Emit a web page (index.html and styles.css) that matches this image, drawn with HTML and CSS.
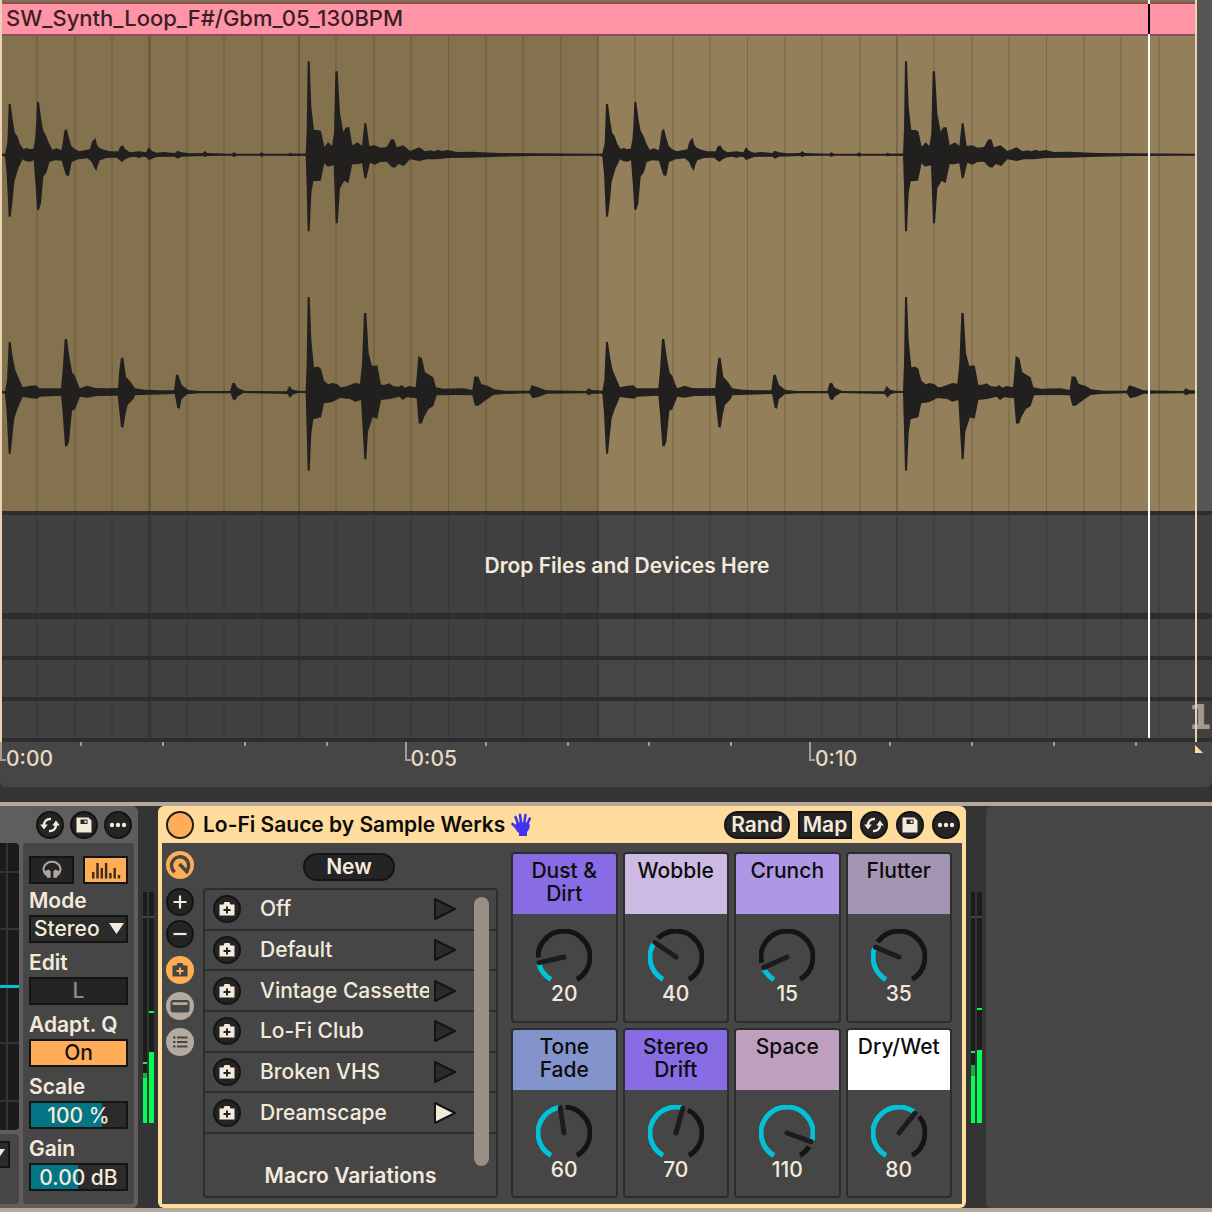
FILE: index.html
```html
<!DOCTYPE html>
<html lang="en">
<head>
<meta charset="utf-8">
<meta name="viewport" content="width=device-width, initial-scale=1">
<title>SW_Synth_Loop_F#/Gbm_05_130BPM</title>
<link rel="stylesheet" href="styles.css">
</head>
<body>
<svg class="defs" aria-hidden="true">
  <symbol id="i-swap" viewBox="0 0 28 28"><g fill="none" stroke="currentColor" stroke-width="2.400"><path d="M15 8C11 7.500 8 10 8 14"/><path d="M13 20C17 20.500 20 18 20 14"/></g><path fill="currentColor" d="M4.200 13.500h7.600L8 18.500zM16.200 14.500h7.600L20 9.500z"/></symbol>
  <symbol id="i-save" viewBox="0 0 28 28"><path fill="currentColor" fill-rule="evenodd" d="M6.500 6.500h12l3 3v12h-15zM10.500 8.500v4.500h7V8.500z"/><path fill="currentColor" d="M14.500 9.500h2v2.500h-2z"/></symbol>
  <symbol id="i-more" viewBox="0 0 28 28"><g fill="currentColor"><circle cx="8" cy="14" r="2.200"/><circle cx="14" cy="14" r="2.200"/><circle cx="20" cy="14" r="2.200"/></g></symbol>
  <symbol id="i-cam" viewBox="0 0 28 28"><path fill="currentColor" fill-rule="evenodd" d="M7 9.500h3.500l1-2.500h5l1 2.500H21.500v11H6.500v-11zM13 11.500v2.500h-2.500v2H13v2.500h2v-2.500h2.500v-2H15v-2.500z"/></symbol>
  <symbol id="i-play" viewBox="0 0 26 26"><path stroke="#141414" stroke-width="2" stroke-linejoin="round" fill="currentColor" d="M3 3L23 13L3 23z"/></symbol>
  <symbol id="i-knob" viewBox="0 0 28 28"><path fill="none" stroke="currentColor" stroke-width="3.500" d="M8.800 21.200A8.600 8.600 0 1 1 21 19.500M13.500 13L22 22"/></symbol>
</svg>

<main class="arrangement">
  <div class="lane">
    <div class="lane-body clip">
      <header class="clip-name">SW_Synth_Loop_F#/Gbm_05_130BPM</header>
      <div class="clip-body">
        <svg class="wave" viewBox="0 0 3588 1425" preserveAspectRatio="none" role="img" aria-label="Stereo waveform">
          <g id="phrase">
            <path transform="translate(0 -108)" d="M6 461L15 461 22 430 26 312 32 312 39 365 45 400 52 408 60 432 70 447 80 444 88 447 100 446 105 420 108 380 111 306 117 306 124 360 130 393 137 404 148 432 157 449 170 445 184 451 188 430 193 392 200 386 206 410 214 438 225 448 238 454 258 450 270 448 276 425 286 413 291 434 298 443 312 449 330 454 355 454 360 440 369 436 376 448 390 457 418 454 438 457 446 442 456 453 470 458 490 456 525 459 532 452 545 457 570 460 608 459 615 453 622 459 695 461 702 457 710 461 778 461 785 457 792 461 865 461 870 458 878 461 920 461 920 467 878 467 870 469 862 467 792 467 785 470 778 467 710 467 702 471 695 467 622 468 615 471 608 468 545 470 532 476 525 470 470 471 456 476 446 480 438 471 425 470 418 474 405 470 390 472 376 478 366 486 358 480 350 473 320 474 300 481 294 495 289 513 282 502 275 485 262 475 235 478 215 486 207 528 198 526 190 500 185 482 165 481 148 486 140 516 130 530 123 610 117 629 111 629 107 560 101 480 92 485 78 484 68 478 55 505 43 545 38 600 32 650 26 650 20 520 15 470 6 467Z"/>
            <path transform="translate(870 12)" d="M0 341L47 341 50 270 53 64 59 64 64 200 72 270 85 270 93 274 103 320 115 307 126 318 132 280 136 94 143 94 150 220 160 275 168 262 178 262 187 316 203 307 216 318 220 280 223 250 229 250 238 318 255 316 270 323 290 321 303 298 312 298 320 322 340 316 360 333 388 322 405 334 420 331 432 334 445 329 455 333 475 330 500 336 545 335 630 339 730 340 940 341 940 347 730 348 635 350 540 353 475 354 440 358 410 358 388 363 360 358 342 378 325 372 315 383 305 381 290 365 270 366 255 374 240 368 229 415 223 415 216 370 200 373 187 373 175 430 163 422 150 445 143 550 137 550 131 376 113 380 103 370 92 422 70 424 64 460 59 574 53 574 50 440 47 347 0 347Z"/>
            <path transform="translate(0 732)" d="M6 333L15 333 21 300 26 186 32 186 38 230 46 270 55 292 68 322 90 317 108 316 118 325 150 325 183 325 188 270 194 177 201 177 208 230 217 278 225 288 239 325 262 317 285 324 320 325 354 324 358 270 363 233 370 233 378 290 392 306 405 325 435 329 480 331 522 331 528 284 535 284 545 315 565 330 600 333 690 333 697 309 704 308 712 323 735 333 860 334 868 318 878 329 895 333 895 339 880 343 870 353 862 342 730 339 712 350 706 361 698 358 692 340 600 340 562 343 545 357 539 386 532 384 524 342 405 346 400 358 383 375 377 400 370 443 363 441 353 347 290 348 262 353 240 350 225 388 216 392 207 485 201 500 195 498 188 400 183 347 120 350 110 356 90 354 68 351 52 388 43 415 38 460 32 521 26 521 20 400 15 342 6 339Z"/>
            <path transform="translate(870 732)" d="M12 332L47 333 50 250 53 51 59 51 64 180 72 262 85 260 93 266 102 302 115 313 128 309 142 313 152 322 165 320 195 309 210 311 216 250 222 99 229 99 236 220 246 258 262 256 273 314 285 314 298 310 310 319 328 320 335 315 345 323 358 318 377 322 380 290 385 228 396 235 405 277 430 292 438 322 460 326 520 325 547 330 553 289 565 290 574 312 595 318 612 328 650 332 718 332 725 316 740 320 768 331 888 333 895 325 905 330 940 332 940 340 905 342 895 346 888 340 770 341 745 351 728 355 718 340 640 342 610 345 585 362 565 377 555 377 547 346 500 345 440 346 430 378 415 388 402 412 396 430 386 431 380 355 350 352 338 360 328 350 300 357 273 360 262 416 248 412 234 455 229 538 223 538 213 360 195 365 180 357 150 354 125 367 102 370 93 412 70 418 64 460 59 572 53 572 50 450 47 339 12 339Z"/>
          </g>
          <use href="#phrase" x="1792"/>
        </svg>
      </div>
    </div>
    <div class="lane-tail tail-top"></div>
  </div>
  <div class="lane drop">
    <div class="lane-body"><p class="drop-text">Drop Files and Devices Here</p></div>
    <div class="lane-tail"></div>
  </div>
  <div class="lane thin"><div class="lane-body"></div><div class="lane-tail"></div></div>
  <div class="lane thin"><div class="lane-body"></div><div class="lane-tail"></div></div>
  <div class="lane thin"><div class="lane-body"></div><div class="lane-tail"></div></div>
  <div class="ruler">
    <div class="seconds"><span>0:00</span></div>
    <div class="seconds"><span>0:05</span></div>
    <div class="seconds"><span>0:10</span></div>
  </div>
  <div class="edge edge-start"></div>
  <div class="bar-count">1</div>
  <div class="edge edge-end"></div>
  <div class="playhead"></div>
</main>

<section class="rack">
  <article class="device eq">
    <header class="eq-head">
      <button class="round" aria-label="Hot-swap"><svg><use href="#i-swap"/></svg></button>
      <button class="round" aria-label="Save"><svg><use href="#i-save"/></svg></button>
      <button class="round" aria-label="More"><svg><use href="#i-more"/></svg></button>
    </header>
    <div class="eq-main">
      <div class="eq-left">
        <div class="graph"></div>
        <div class="graph-foot"><button class="mini" aria-label="Filter menu"><i class="tri"></i></button></div>
      </div>
      <div class="eq-panel">
        <div class="pair">
          <button class="box" aria-label="Audition"><svg viewBox="0 0 24 22"><path fill="none" stroke="#b0a8a0" stroke-width="2.200" d="M5 16C2 12 2 9 4 6C8 0.500 16 0.500 20 6C22 9 22 12 19 16"/><path fill="#b0a8a0" d="M4.500 12l4-1.500 2 2v7l-3.500 0-3-4zM19.500 12l-4-1.500-2 2v7l3.500 0 3-4z"/></svg></button>
          <button class="box on" aria-label="Analyze"><svg viewBox="0 0 30 18"><path stroke="#3c2c18" stroke-width="2.400" d="M2.200 17.500V11M6.500 17.500V2M10.800 17.500V7M15.100 17.500V2M19.400 17.500V12M23.700 17.500V7M28 17.500V14"/></svg></button>
        </div>
        <label class="field">Mode<span class="select"><select><option>Stereo</option></select><i class="tri"></i></span></label>
        <div class="field"><span>Edit</span><button class="box dim">L</button></div>
        <div class="field"><span>Adapt. Q</span><button class="box on">On</button></div>
        <label class="field">Scale<input class="box value scale" type="text" value="100 %"></label>
        <label class="field">Gain<input class="box value gain" type="text" value="0.00 dB"></label>
      </div>
    </div>
  </article>

  <div class="meters">
    <svg viewBox="0 0 10 231"><path fill="#1c1c1c" d="M0 0h4v231H0zM6 0h5v231H6z"/><path fill="#464646" d="M0 24h4v2H0zM6 24h5v2H6z"/><path fill="#0fb045" d="M0 181h4v6H0z"/><path fill="#00ff55" d="M0 186h4v45H0zM6 160h5v71H6zM0 170h4v2H0zM6 119h5v2H6z"/></svg>
  </div>

  <article class="device sauce">
    <header class="sauce-head">
      <button class="power" aria-label="Device on"></button>
      <h1>Lo-Fi Sauce by Sample Werks</h1>
      <svg class="hand" viewBox="0 0 22 24"><g fill="none" stroke="#4034f0" stroke-linecap="round" stroke-width="2.600"><path d="M7.500 12L4.500 4M10.200 11L9 1.800M13 11L14.500 2M15.500 13L18.800 5.500"/><path d="M7 16L1.500 11"/></g><path fill="#4034f0" d="M6 9.500h10.500L19 12c-.5 2.500-1 5-3 7v4h-8v-3C5 18 4.500 16 3.500 13z"/></svg>
      <span class="spacer"></span>
      <button class="pill">Rand</button>
      <button class="square">Map</button>
      <button class="round" aria-label="Hot-swap"><svg><use href="#i-swap"/></svg></button>
      <button class="round" aria-label="Save"><svg><use href="#i-save"/></svg></button>
      <button class="round" aria-label="More"><svg><use href="#i-more"/></svg></button>
    </header>
    <div class="sauce-main">
      <nav class="side">
        <button class="round amber" aria-label="Show macros"><svg><use href="#i-knob"/></svg></button>
        <button class="round gap-top" aria-label="Add macro"><svg viewBox="0 0 28 28"><path stroke="currentColor" stroke-width="2.200" d="M14 7.500v13M7.500 14h13"/></svg></button>
        <button class="round tight" aria-label="Remove macro"><svg viewBox="0 0 28 28"><path stroke="currentColor" stroke-width="2.200" d="M7.500 14h13"/></svg></button>
        <button class="round amber" aria-label="Show variations"><svg><use href="#i-cam"/></svg></button>
        <button class="round stone" aria-label="Show devices"><svg viewBox="0 0 28 28"><rect x="5.500" y="9" width="17" height="10.500" rx="2" fill="none" stroke="currentColor" stroke-width="2"/><path fill="currentColor" d="M6 13h16v6H6z"/><path stroke="currentColor" stroke-width="1.500" d="M6 9.500h16"/></svg></button>
        <button class="round stone" aria-label="Show chains"><svg viewBox="0 0 28 28"><path stroke="currentColor" stroke-width="2" d="M7 9.500h2.500M11 9.500h10.500M7 14h2.500M11 14h10.500M7 18.500h2.500M11 18.500h10.500"/></svg></button>
      </nav>
      <div class="variations">
        <button class="pill new">New</button>
        <div class="list">
          <ul>
            <li><button class="round" aria-label="Store"><svg><use href="#i-cam"/></svg></button><span>Off</span><button class="play" aria-label="Launch"><svg><use href="#i-play"/></svg></button></li>
            <li><button class="round" aria-label="Store"><svg><use href="#i-cam"/></svg></button><span>Default</span><button class="play" aria-label="Launch"><svg><use href="#i-play"/></svg></button></li>
            <li><button class="round" aria-label="Store"><svg><use href="#i-cam"/></svg></button><span>Vintage Cassette</span><button class="play" aria-label="Launch"><svg><use href="#i-play"/></svg></button></li>
            <li><button class="round" aria-label="Store"><svg><use href="#i-cam"/></svg></button><span>Lo-Fi Club</span><button class="play" aria-label="Launch"><svg><use href="#i-play"/></svg></button></li>
            <li><button class="round" aria-label="Store"><svg><use href="#i-cam"/></svg></button><span>Broken VHS</span><button class="play" aria-label="Launch"><svg><use href="#i-play"/></svg></button></li>
            <li><button class="round" aria-label="Store"><svg><use href="#i-cam"/></svg></button><span>Dreamscape</span><button class="play active" aria-label="Launch"><svg><use href="#i-play"/></svg></button></li>
          </ul>
          <p>Macro Variations</p>
          <div class="scrollbar"></div>
        </div>
      </div>
      <div class="macros">
        <label class="macro"><span class="name violet">Dust &amp; Dirt</span><span class="knob"><svg viewBox="0 0 56 56"><path class="rest" pathLength="127" stroke-dasharray="0 25 102" d="M15 50.500A26 26 0 1 1 41 50.500"/><path class="done" pathLength="127" stroke-dasharray="19 200" d="M15 50.500A26 26 0 1 1 41 50.500"/><path class="hand-line" transform="rotate(-102.800 28 28)" d="M28 28V2.500"/></svg><input type="range" min="0" max="127" value="20"></span><output>20</output></label>
        <label class="macro"><span class="name lilac">Wobble</span><span class="knob"><svg viewBox="0 0 56 56"><path class="rest" pathLength="127" stroke-dasharray="0 45 82" d="M15 50.500A26 26 0 1 1 41 50.500"/><path class="done" pathLength="127" stroke-dasharray="39 200" d="M15 50.500A26 26 0 1 1 41 50.500"/><path class="hand-line" transform="rotate(-55.500 28 28)" d="M28 28V2.500"/></svg><input type="range" min="0" max="127" value="40"></span><output>40</output></label>
        <label class="macro"><span class="name lavender">Crunch</span><span class="knob"><svg viewBox="0 0 56 56"><path class="rest" pathLength="127" stroke-dasharray="0 20 107" d="M15 50.500A26 26 0 1 1 41 50.500"/><path class="done" pathLength="127" stroke-dasharray="14 200" d="M15 50.500A26 26 0 1 1 41 50.500"/><path class="hand-line" transform="rotate(-114.600 28 28)" d="M28 28V2.500"/></svg><input type="range" min="0" max="127" value="15"></span><output>15</output></label>
        <label class="macro"><span class="name mauve">Flutter</span><span class="knob"><svg viewBox="0 0 56 56"><path class="rest" pathLength="127" stroke-dasharray="0 40 87" d="M15 50.500A26 26 0 1 1 41 50.500"/><path class="done" pathLength="127" stroke-dasharray="34 200" d="M15 50.500A26 26 0 1 1 41 50.500"/><path class="hand-line" transform="rotate(-67.300 28 28)" d="M28 28V2.500"/></svg><input type="range" min="0" max="127" value="35"></span><output>35</output></label>
        <label class="macro"><span class="name blue">Tone Fade</span><span class="knob"><svg viewBox="0 0 56 56"><path class="rest" pathLength="127" stroke-dasharray="0 65 62" d="M15 50.500A26 26 0 1 1 41 50.500"/><path class="done" pathLength="127" stroke-dasharray="59 200" d="M15 50.500A26 26 0 1 1 41 50.500"/><path class="hand-line" transform="rotate(-8.300 28 28)" d="M28 28V2.500"/></svg><input type="range" min="0" max="127" value="60"></span><output>60</output></label>
        <label class="macro"><span class="name violet">Stereo Drift</span><span class="knob"><svg viewBox="0 0 56 56"><path class="rest" pathLength="127" stroke-dasharray="0 75 52" d="M15 50.500A26 26 0 1 1 41 50.500"/><path class="done" pathLength="127" stroke-dasharray="69 200" d="M15 50.500A26 26 0 1 1 41 50.500"/><path class="hand-line" transform="rotate(15.400 28 28)" d="M28 28V2.500"/></svg><input type="range" min="0" max="127" value="70"></span><output>70</output></label>
        <label class="macro"><span class="name rose">Space</span><span class="knob"><svg viewBox="0 0 56 56"><path class="rest" pathLength="127" stroke-dasharray="0 115 12" d="M15 50.500A26 26 0 1 1 41 50.500"/><path class="done" pathLength="127" stroke-dasharray="109 200" d="M15 50.500A26 26 0 1 1 41 50.500"/><path class="hand-line" transform="rotate(109.800 28 28)" d="M28 28V2.500"/></svg><input type="range" min="0" max="127" value="110"></span><output>110</output></label>
        <label class="macro"><span class="name white">Dry/Wet</span><span class="knob"><svg viewBox="0 0 56 56"><path class="rest" pathLength="127" stroke-dasharray="0 85 42" d="M15 50.500A26 26 0 1 1 41 50.500"/><path class="done" pathLength="127" stroke-dasharray="79 200" d="M15 50.500A26 26 0 1 1 41 50.500"/><path class="hand-line" transform="rotate(39 28 28)" d="M28 28V2.500"/></svg><input type="range" min="0" max="127" value="80"></span><output>80</output></label>
      </div>
    </div>
  </article>

  <div class="meters">
    <svg viewBox="0 0 10 231"><path fill="#1c1c1c" d="M0 0h4v231H0zM6 0h5v231H6z"/><path fill="#464646" d="M0 24h4v2H0zM6 24h5v2H6z"/><path fill="#0fb045" d="M0 173h4v11H0z"/><path fill="#00ff55" d="M0 184h4v47H0zM6 158h5v73H6zM0 159h4v2H0zM6 116h5v2H6z"/></svg>
  </div>
  <div class="empty"></div>
</section>
</body>
</html>
```
FILE: styles.css
```css
* { box-sizing: border-box; }

body {
  margin: 0;
  min-height: 100vh;
  background: #343434;
  color: #f4eadc;
  font: 500 21px/24px Inter, "Liberation Sans", sans-serif;
  overflow-x: hidden;
}

button, input, select { font: inherit; color: inherit; }
button { padding: 0; border: 0; cursor: pointer; }
h1, p, ul { margin: 0; padding: 0; }
.defs { position: absolute; width: 0; height: 0; }

/* Arrangement */
.arrangement {
  position: relative;
  display: flex;
  flex-direction: column;
  border-radius: 0 0 6px 6px;
  overflow: hidden;
}
.lane {
  display: flex;
  border-bottom: 4px solid #2d2d2d;
}
.lane-body {
  flex: 1;
  min-width: 0;
  background:
    repeating-linear-gradient(to right, #00000014 0 1px, transparent 1px calc(12.5% - 1px), #00000014 calc(12.5% - 1px) 12.5%),
    repeating-linear-gradient(to right, #0000001a 0 1px, transparent 1px calc(3.125% - 1px), #0000001a calc(3.125% - 1px) 3.125%),
    linear-gradient(to right, #404040 50%, #464646 50%);
}
.lane-tail { flex: 0 0 16px; background: #404040; }
.tail-top { background: #565553; }

.clip { background: #84724f; }
.clip-name {
  margin-top: 2px;
  height: 34px;
  padding: 0 6px;
  border: solid #8a4f59;
  border-width: 2px 0;
  background: #ff94a6;
  color: #3a2024;
  font-size: 22px;
  font-weight: 500;
  line-height: 28px;
}
.clip-body {
  background:
    repeating-linear-gradient(to right, #00000014 0 1px, transparent 1px calc(12.5% - 1px), #00000014 calc(12.5% - 1px) 12.5%),
    repeating-linear-gradient(to right, #0000001c 0 1px, transparent 1px calc(3.125% - 1px), #0000001c calc(3.125% - 1px) 3.125%),
    linear-gradient(to right, #84724f 50%, #937f5a 50%);
}
.wave { display: block; width: 100%; height: 475px; fill: #22201e; }

.drop { border-bottom-width: 6px; }
.drop .lane-body { padding: 39px 0 35px 58px; text-align: center; }
.drop-text { font-weight: 600; line-height: 24px; }
.thin { height: 41px; }

.ruler {
  display: flex;
  height: 45px;
  background: #464646;
  color: #e8d8c0;
  overflow: hidden;
}
.seconds {
  position: relative;
  flex: 0 0 33.375%;
  padding: 5px 0 0 6px;
  background: repeating-linear-gradient(to right, transparent 0 calc(20% - 1px), #a89c90 calc(20% - 1px) calc(20% + 1px)) 0 0 / 100% 4px no-repeat;
}
.seconds::before {
  content: "";
  position: absolute;
  left: 0;
  top: 0;
  width: 4px;
  height: 17px;
  border: solid #a89c90;
  border-width: 0 0 2px 2px;
}

.edge { position: absolute; top: 0; bottom: 45px; width: 2px; background: #e8d4b0; }
.edge-start { left: 0; }
.edge-end { right: 15px; }
.edge-end::after {
  content: "";
  position: absolute;
  top: 100%;
  left: 0;
  margin-top: 3px;
  border: solid transparent;
  border-width: 8px 0 0 8px;
  border-left-color: #ffdc9b;
}
.bar-count {
  position: absolute;
  right: 0;
  top: 697px;
  color: #a09a92;
  font: 700 34px/40px "DejaVu Sans", sans-serif;
}
.playhead {
  position: absolute;
  left: 94.75%;
  top: 0;
  bottom: 49px;
  width: 2px;
  background: linear-gradient(#fff 4px, #000 4px 34px, #fff 34px);
}

/* Device rack */
.rack {
  display: flex;
  margin-top: 15px;
  border: solid #b5a79c;
  border-width: 4px 0;
  height: 410px;
}
.round {
  display: grid;
  place-items: center;
  flex: none;
  width: 28px;
  height: 28px;
  border: 2px solid #141414;
  border-radius: 50%;
  background: #242424;
  color: #f4eadc;
}
.round svg { display: block; width: 28px; height: 28px; margin: -2px; }
.amber { background: #ffad56; border-color: #ffad56; color: #464646; }
.stone { background: #b5aa9e; border-color: #b5aa9e; color: #464646; }

.eq {
  flex: 0 0 138px;
  display: flex;
  flex-direction: column;
  padding: 0 4px 4px 0;
  border-radius: 0 6px 6px 0;
  background: #5f5e5c;
}
.eq-head {
  display: flex;
  justify-content: flex-end;
  align-items: center;
  gap: 6px;
  height: 37px;
  padding-right: 2px;
}
.eq-main { flex: 1; display: flex; gap: 4px; min-height: 0; }
.eq-left { flex: 1; display: flex; flex-direction: column; gap: 4px; }
.graph {
  flex: 1;
  border-radius: 0 4px 4px 0;
  background:
    linear-gradient(#00c3d8, #00c3d8) 0 142px / 100% 3px no-repeat,
    linear-gradient(#333, #333) 0 28px / 100% 2px no-repeat,
    linear-gradient(#333, #333) 0 85px / 100% 2px no-repeat,
    linear-gradient(#333, #333) 0 199px / 100% 2px no-repeat,
    linear-gradient(#333, #333) 0 257px / 100% 2px no-repeat,
    linear-gradient(#333, #333) 6px 0 / 2px 100% no-repeat,
    #1a1a1a;
}
.graph-foot { height: 70px; padding-top: 7px; border-radius: 0 4px 4px 0; background: #464646; overflow: hidden; }
.mini { display: flex; align-items: center; justify-content: flex-end; width: 10px; height: 27px; padding-right: 3px; border: 2px solid #141414; border-left: 0; background: #2b2b2b; overflow: hidden; }
.tri { display: block; flex: none; width: 15px; height: 11px; background: #f4eadc; clip-path: polygon(0 0, 100% 0, 50% 100%); }
.eq-panel {
  flex: 0 0 111px;
  display: flex;
  flex-direction: column;
  gap: 9px;
  padding: 13px 6px 0;
  border-radius: 4px;
  background: #464646;
}
.pair { display: flex; justify-content: space-between; margin-bottom: -3px; }
.pair .box { width: 45px; display: grid; place-items: center; }
.pair .box:first-child svg { width: 22px; height: 20px; }
.pair .box:last-child svg { width: 30px; height: 18px; }
.box {
  display: block;
  width: 100%;
  height: 28px;
  border: 2px solid #141414;
  background: #242424;
  font-weight: 500;
  line-height: 24px;
  text-align: center;
}
.on { background: #ffad56; color: #141414; }
.dim { color: #8f8a82; }
.field { display: flex; flex-direction: column; gap: 3px; font-weight: 600; line-height: 22px; }
.value { padding: 0; }
.scale { background: linear-gradient(to right, #037585 75%, #2b2b2b 75%); }
.gain { background: linear-gradient(to right, #037585 50%, #2b2b2b 50%); }
.select { position: relative; display: block; height: 28px; }
.select select {
  display: block;
  appearance: none;
  width: 100%;
  height: 28px;
  padding: 0 0 0 3px;
  border: 2px solid #141414;
  border-radius: 0;
  background: #2b2b2b;
  font-weight: 500;
}
.select .tri { position: absolute; right: 4px; top: 8px; pointer-events: none; }

.meters { flex: 0 0 20px; padding: 86px 0 0 5px; }
.meters svg { display: block; width: 10px; height: 231px; overflow: visible; }

.sauce {
  flex: 0 0 808px;
  display: flex;
  flex-direction: column;
  padding: 0 4px 4px;
  border-radius: 6px;
  background: #ffdc9b;
}
.sauce-head { display: flex; align-items: center; height: 37px; padding: 0 2px 0 4px; color: #0c0c0c; }
.sauce-head h1 { margin-left: 9px; font: 600 21px/24px Inter, sans-serif; white-space: nowrap; }
.power { flex: none; width: 28px; height: 28px; border: 2px solid #1e1e1e; border-radius: 50%; background: #ffad56; }
.hand { width: 22px; height: 24px; margin-left: 6px; }
.spacer { flex: 1; }
.pill, .square {
  height: 28px;
  border: 2px solid #141414;
  background: #242424;
  color: #f4eadc;
  line-height: 24px;
  font-weight: 600;
}
.pill { width: 66px; border-radius: 14px; }
.square { width: 54px; margin-left: 8px; }
.sauce-head .round { margin-left: 8px; }

.sauce-main { flex: 1; display: flex; min-height: 0; background: #464646; }
.side { display: flex; flex-direction: column; gap: 8px; padding: 8px 9px 0 4px; }
.gap-top { margin-top: 1px; }
.tight { margin-top: -4px; }
.variations { flex: 0 0 295px; display: flex; flex-direction: column; align-items: center; padding: 10px 0 6px; }
.new { width: 92px; margin-right: 3px; font-weight: 600; }
.list {
  position: relative;
  flex: 1;
  display: flex;
  flex-direction: column;
  width: 100%;
  margin-top: 7px;
  border: 2px solid #2d2d2d;
  border-radius: 4px;
}
.list ul { display: grid; grid-template-rows: repeat(6, 1fr); height: 244px; list-style: none; }
.list li { display: flex; align-items: center; border-bottom: 2px solid #2d2d2d; padding-left: 8px; }
.list li span { width: 169px; margin-left: 19px; overflow: hidden; white-space: nowrap; }
.list p { margin: auto 0 8px; font-weight: 600; text-align: center; }
.play { width: 26px; height: 26px; margin-left: 3px; background: none; color: #2b2b2b; }
.play svg { display: block; width: 26px; height: 26px; }
.active { color: #f4eadc; }
.scrollbar { position: absolute; top: 7px; right: 7px; width: 15px; height: 269px; border-radius: 8px; background: #989084; }

.macros {
  flex: 1;
  display: grid;
  grid-template: 1fr 1fr / repeat(4, 1fr);
  gap: 5px;
  padding: 9px 10px 6px 13px;
}
.macro {
  display: flex;
  flex-direction: column;
  align-items: center;
  border: 2px solid #2d2d2d;
  border-radius: 4px;
  overflow: hidden;
}
.name {
  align-self: stretch;
  height: 60px;
  padding: 5px 12px 0;
  color: #0c0c0c;
  line-height: 23px;
  text-align: center;
}
.violet { background: #886ce4; }
.lilac { background: #cdbbe4; }
.lavender { background: #ae98e5; }
.mauve { background: #a595b5; }
.blue { background: #8393cc; }
.rose { background: #bf9fbe; }
.white { background: #fff; padding-inline: 0; }
.knob { position: relative; width: 56px; height: 56px; margin-top: 15px; }
.knob svg { display: block; width: 56px; height: 56px; fill: none; stroke-width: 5; }
.knob input { position: absolute; inset: 0; width: 100%; height: 100%; margin: 0; opacity: 0; }
.rest { stroke: #141414; }
.done { stroke: #00c3d8; }
.hand-line { stroke: #1c1c1c; stroke-linecap: round; }
.macro output { margin-top: -3px; line-height: 24px; }

.empty { flex: 1; border-radius: 6px 0 0 6px; background: #464646; }
```
